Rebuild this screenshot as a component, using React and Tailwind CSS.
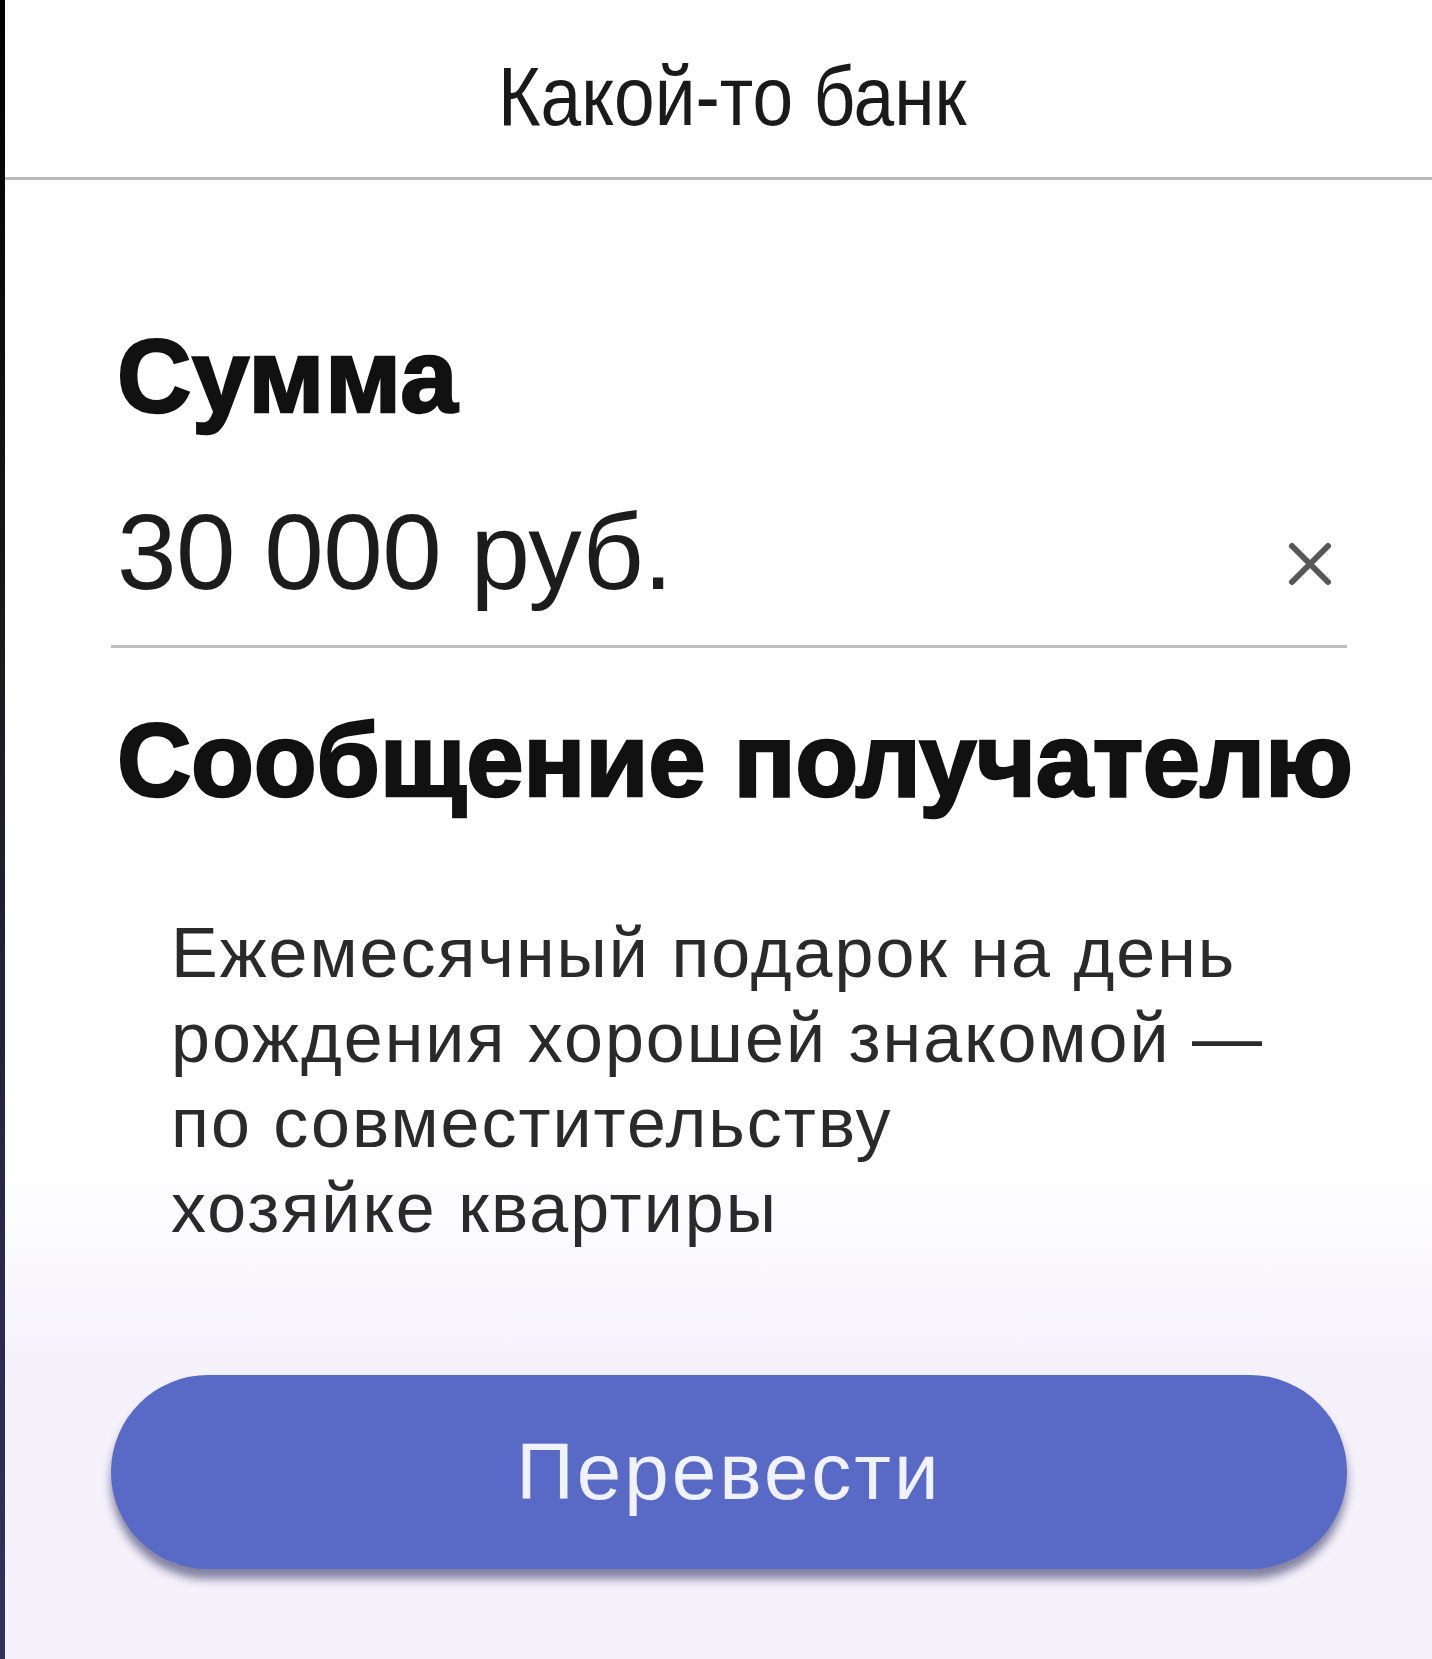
export default function App() {
  return (
    <div className="flex min-h-[1659px] w-full bg-[linear-gradient(to_bottom,#ffffff_0%,#ffffff_70%,#f5f2fb_82%,#f5f2fb_100%)] font-['Liberation_Sans',Arial,sans-serif]">
      <div className="w-[5px] shrink-0 bg-[linear-gradient(to_bottom,#000000_0%,#1b1b1f_40%,#2c2a52_80%,#33305e_100%)]" />
      <div className="flex min-w-0 flex-1 flex-col">
        {/* Header */}
        <header className="flex h-[180px] justify-center border-b-[3px] border-[#b9b9b9] pt-[54px] pl-[28px]">
          <h1 className="origin-center scale-x-[0.87] whitespace-nowrap text-[84px] leading-none font-normal text-[#1a1a1a]">
            Какой-то банк
          </h1>
        </header>

        <main className="flex flex-col pl-[106px] pr-[85px]">
          <h2 className="mt-[145px] pl-[6px] text-[103px] leading-none font-bold tracking-[0.5px] text-[#111] [-webkit-text-stroke:2.5px_#111]">
            Сумма
          </h2>

          <div className="mt-[71px] flex items-start justify-between border-b-[3px] border-[#bdbdbd] pb-[39px] pl-[6px] pr-[14px]">
            <span className="whitespace-nowrap text-[107px] leading-none font-normal tracking-[-0.5px] text-[#1c1c1c]">
              30 000 руб.
            </span>
            <svg
              className="mt-[42px] h-[46px] w-[46px] shrink-0"
              viewBox="0 0 46 46"
              fill="none"
              stroke="#575757"
              strokeWidth="6"
              strokeLinecap="round"
            >
              <path d="M5 5 L41 41 M41 5 L5 41" />
            </svg>
          </div>

          <h2 className="mt-[61px] pl-[6px] whitespace-nowrap text-[103px] leading-none font-bold tracking-[-0.3px] text-[#111] [-webkit-text-stroke:2.5px_#111]">
            Сообщение получателю
          </h2>

          <p className="mt-[99px] pl-[60px] whitespace-nowrap text-[70px] leading-[85px] font-normal tracking-[2px] text-[#2a2a2a]">
            Ежемесячный подарок на день
            <br />
            рождения хорошей знакомой —
            <br />
            по совместительству
            <br />
            хозяйке квартиры
          </p>

          <button
            type="button"
            className="mt-[124px] flex h-[194px] w-full items-center justify-center rounded-full bg-[#5869c6] shadow-[0_10px_10px_rgba(35,35,90,0.55)]"
          >
            <span className="whitespace-nowrap text-[80px] leading-none font-normal tracking-[3px] text-[#f0f2ff]">
              Перевести
            </span>
          </button>
        </main>
      </div>
    </div>
  );
}
